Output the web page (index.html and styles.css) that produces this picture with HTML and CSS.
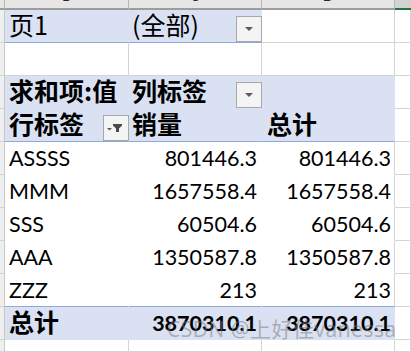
FILE: index.html
```html
<!DOCTYPE html>
<html lang="zh">
<head>
<meta charset="utf-8">
<title>数据透视表</title>
<link rel="stylesheet" href="styles.css">
</head>
<body>
<div class="sheet">
  <div class="corner"></div>
  <div class="colhdr"><span>B</span></div>
  <div class="colhdr"><span>C</span></div>
  <div class="colhdr"><span>D</span></div>
  <div class="colhdr sel"></div>

  <div class="rh"></div>
  <div class="c pv pb ca"><span class="zh">页1</span></div>
  <div class="c pv pb cb"><span class="zh">(全部)</span><span class="dd"><svg width="24" height="24" viewBox="0 0 24 24"><polygon points="8,10 16,10 12,14" fill="#5b5b5b"/></svg></span></div>
  <div class="c"></div>
  <div class="c"></div>

  <div class="rh"></div>
  <div class="c"></div>
  <div class="c"></div>
  <div class="c"></div>
  <div class="c"></div>

  <div class="rh"></div>
  <div class="c pv ca"><span class="zh b">求和项:值</span></div>
  <div class="c pv cb"><span class="zh b">列标签</span><span class="dd"><svg width="24" height="24" viewBox="0 0 24 24"><polygon points="8,10 16,10 12,14" fill="#5b5b5b"/></svg></span></div>
  <div class="c pv"></div>
  <div class="c"></div>

  <div class="rh"></div>
  <div class="c pv pb ca"><span class="zh b">行标签</span><span class="dd"><svg width="24" height="24" viewBox="0 0 24 24"><polygon points="3,12 8,12 5.5,14.5" fill="#5b5b5b"/><polygon points="9,8 18,8 18,9.5 15,12.5 15,16 12,16 12,12.5 9,9.5" fill="#4a4a4a"/></svg></span></div>
  <div class="c pv pb cb"><span class="zh b">销量</span></div>
  <div class="c pv pb cc"><span class="zh b">总计</span></div>
  <div class="c"></div>

  <div class="rh"></div>
  <div class="c dt ca"><span class="en">ASSSS</span></div>
  <div class="c dt nb"><span class="en">801446.3</span></div>
  <div class="c dt edge nc"><span class="en">801446.3</span></div>
  <div class="c"></div>

  <div class="rh"></div>
  <div class="c dt ca"><span class="en">MMM</span></div>
  <div class="c dt nb"><span class="en">1657558.4</span></div>
  <div class="c dt edge nc"><span class="en">1657558.4</span></div>
  <div class="c"></div>

  <div class="rh"></div>
  <div class="c dt ca"><span class="en">SSS</span></div>
  <div class="c dt nb"><span class="en">60504.6</span></div>
  <div class="c dt edge nc"><span class="en">60504.6</span></div>
  <div class="c"></div>

  <div class="rh"></div>
  <div class="c dt ca"><span class="en">AAA</span></div>
  <div class="c dt nb"><span class="en">1350587.8</span></div>
  <div class="c dt edge nc"><span class="en">1350587.8</span></div>
  <div class="c"></div>

  <div class="rh"></div>
  <div class="c dt pb ca"><span class="en">ZZZ</span></div>
  <div class="c dt pb nb"><span class="en">213</span></div>
  <div class="c dt pb edge nc"><span class="en">213</span></div>
  <div class="c"></div>

  <div class="rh"></div>
  <div class="c pv ca"><span class="zh b">总计</span></div>
  <div class="c pv nb"><span class="en b">3870310.1</span></div>
  <div class="c pv nc"><span class="en b">3870310.1</span></div>
  <div class="c"></div>

  <div class="rh"></div>
  <div class="c"></div>
  <div class="c"></div>
  <div class="c"></div>
  <div class="c"></div>
</div>
<div class="wm">CSDN @上好佳vanessa</div>
</body>
</html>
```

FILE: styles.css
```css
html, body {
  margin: 0;
  padding: 0;
  background: #ffffff;
  overflow: hidden;
}

body {
  position: relative;
  width: 411px;
  height: 352px;
  font-family: "Noto Sans CJK SC", sans-serif;
  color: #000;
}

.sheet {
  display: grid;
  grid-template-columns: 5px 124px 133px 133px 1fr;
  grid-template-rows: 10px repeat(10, 33px) 1fr;
  height: 352px;
}

.corner,
.colhdr {
  box-sizing: border-box;
  background: #e6e6e6;
  border-right: 1px solid #b6b6b6;
  border-bottom: 2px solid #9d9d9d;
  overflow: hidden;
  text-align: center;
}

.colhdr span {
  display: block;
  margin-top: -11px;
  font: 14px/14px Lato, sans-serif;
  color: #262626;
}

.colhdr.sel {
  background: #d2d2d2;
  border-right: none;
  border-bottom-color: #217346;
}

.rh {
  box-sizing: border-box;
  background: #efefef;
  border-right: 1px solid #c8c8c8;
  border-bottom: 1px solid #d4d4d4;
}

.c {
  box-sizing: border-box;
  background: #ffffff;
  border-right: 1px solid #d4d4d4;
  border-bottom: 1px solid #d4d4d4;
  display: flex;
  align-items: flex-end;
  white-space: nowrap;
}

.pv {
  background: #d9e1f2;
  border-color: #d9e1f2;
}

.dt {
  border-color: #ffffff;
}

.edge {
  border-right-color: #d4d4d4;
}

.pb {
  border-bottom-color: #8ea9db;
}

.ca { padding-left: 4px; }
.cb { padding-left: 3px; }
.cc { padding-left: 5px; }

.nb {
  justify-content: flex-end;
  padding-right: 4px;
}

.nc {
  justify-content: flex-end;
  padding-right: 3px;
}

.zh {
  font-family: "Noto Sans CJK SC", sans-serif;
  font-size: 25px;
  line-height: 25px;
  padding-bottom: 5px;
}

.en {
  font-family: Lato, "Noto Sans CJK SC", sans-serif;
  font-size: 21.5px;
  line-height: 25px;
  padding-bottom: 3px;
}

.b {
  font-weight: 700;
}

.dd {
  box-sizing: border-box;
  width: 26px;
  height: 26px;
  margin-left: auto;
  margin-right: -1px;
  border: 1px solid #a8a8a8;
  background: #f4f4f4;
  display: block;
}

.dd svg {
  display: block;
}

.wm {
  position: absolute;
  left: 167px;
  top: 315px;
  font-family: "Open Sans", "Noto Sans CJK SC", sans-serif;
  font-size: 21px;
  line-height: 28px;
  letter-spacing: 0.5px;
  color: rgba(120, 120, 120, 0.5);
  white-space: nowrap;
}
```
